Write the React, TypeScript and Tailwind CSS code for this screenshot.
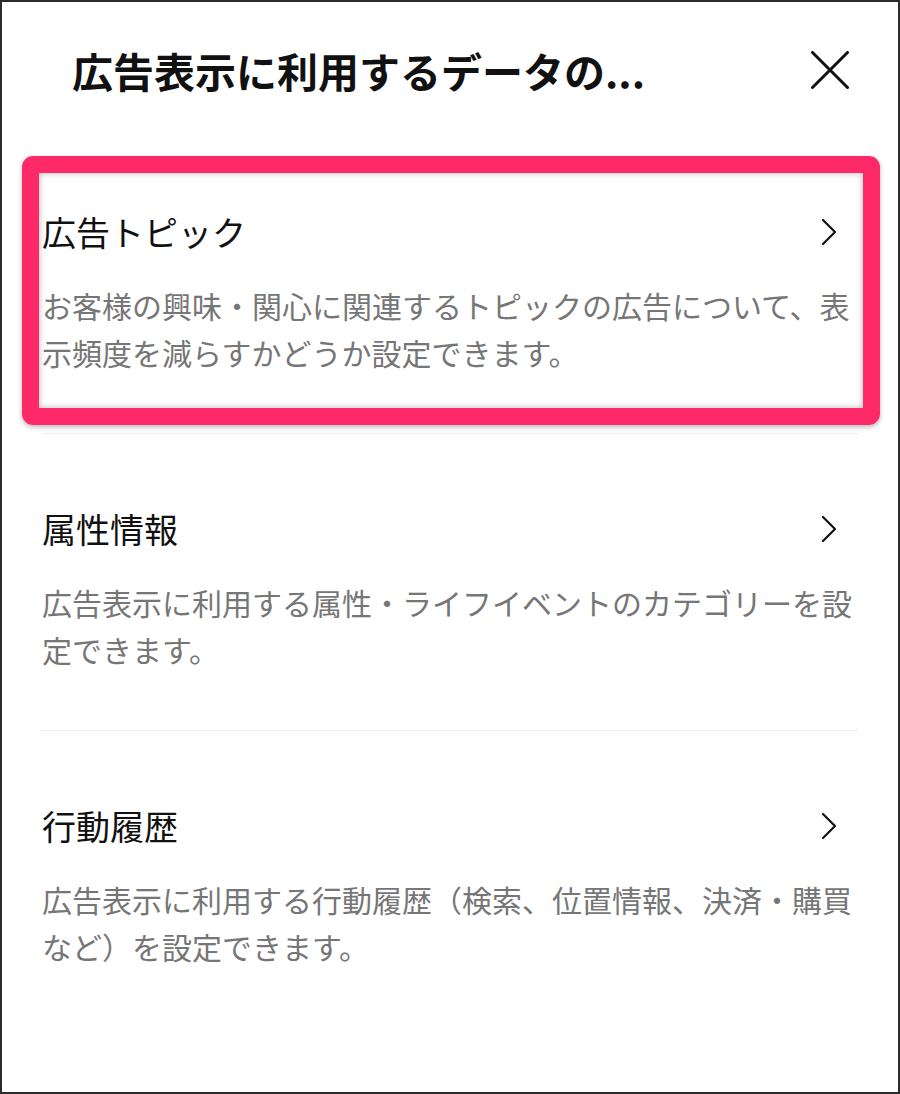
import React from 'react';

type Item = {
    id: string;
    title: string;
    description: string;
    highlighted?: boolean;
};

const items: Item[] = [
    {
        id: 'topics',
        title: '広告トピック',
        description: 'お客様の興味・関心に関連するトピックの広告について、表示頻度を減らすかどうか設定できます。',
        highlighted: true,
    },
    {
        id: 'attributes',
        title: '属性情報',
        description: '広告表示に利用する属性・ライフイベントのカテゴリーを設定できます。',
    },
    {
        id: 'history',
        title: '行動履歴',
        description: '広告表示に利用する行動履歴（検索、位置情報、決済・購買など）を設定できます。',
    },
];

const ChevronRight = () => (
    <svg width="16" height="28" viewBox="0 0 16 28" fill="none" className="shrink-0">
        <polyline points="2,2 14,14 2,26" stroke="#111" strokeWidth="2.2" strokeLinecap="round" strokeLinejoin="round" />
    </svg>
);

const CloseIcon = () => (
    <svg width="38" height="38" viewBox="0 0 38 38" fill="none">
        <line x1="1.5" y1="1.5" x2="36.5" y2="36.5" stroke="#111" strokeWidth="3" strokeLinecap="round" />
        <line x1="36.5" y1="1.5" x2="1.5" y2="36.5" stroke="#111" strokeWidth="3" strokeLinecap="round" />
    </svg>
);

const SettingRow = ({ item }: { item: Item }) => (
    <div className="relative border-b border-[#ececec] last:border-b-0 pt-[73px] pb-[57px]">
        {/* Highlight annotation over the first row */}
        {item.highlighted && (
            <div className="pointer-events-none absolute top-[19px] left-[-20px] right-[-22px] h-[269px] rounded-[11px] border-[17px] border-[#fd2a67] shadow-[0_2px_5px_rgba(0,0,0,0.28),inset_0_0_6px_rgba(0,0,0,0.3)]" />
        )}
        <div className="flex items-center justify-between h-[44px]">
            <h3 className="text-[34px] leading-[44px] text-[#111]">{item.title}</h3>
            <div className="pr-[21px]">
                <ChevronRight />
            </div>
        </div>
        <p className="mt-[28px] text-[30px] leading-[47px] text-[#767676]">{item.description}</p>
    </div>
);

export default function App() {
    return (
        <div
            className="w-[900px] h-[1094px] border-2 border-[#2b2b2b] bg-white overflow-hidden"
            style={{ fontFamily: '"Noto Sans CJK JP", "Noto Sans", sans-serif' }}
        >
            {/* Header */}
            <div className="flex items-center justify-between h-[135px] pl-[70px] pr-[49px]">
                <h2 className="text-[41px] font-bold leading-[52px] text-[#111] pt-[1px]">広告表示に利用するデータの...</h2>
                <CloseIcon />
            </div>

            {/* Settings list */}
            <div className="px-[40px]">
                {items.map(item => (
                    <SettingRow key={item.id} item={item} />
                ))}
            </div>
        </div>
    );
}
